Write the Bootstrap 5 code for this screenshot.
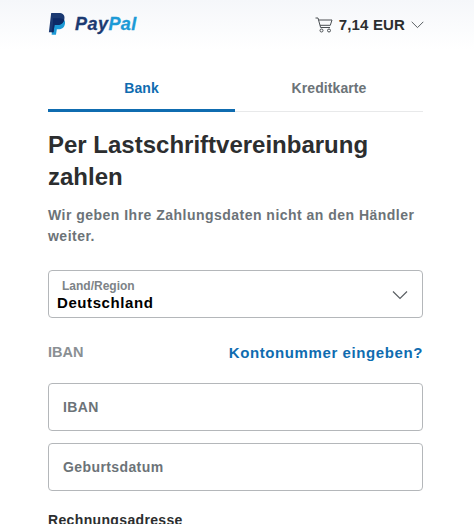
<!DOCTYPE html>
<html lang="de">
<head>
<meta charset="utf-8">
<title>PayPal</title>
<link href="https://cdn.jsdelivr.net/npm/bootstrap@5.3.0/dist/css/bootstrap.min.css" rel="stylesheet">
<style>
html,body{height:524px;overflow:hidden;background:#fff}
body{font-family:"Liberation Sans",Arial,sans-serif;color:#2c2e2f}
.pp-top{height:50px;padding:0 50px 0 48px;background:linear-gradient(180deg,#f5f7fa 0%,#fff 100%)}
.pp-logo{width:19px;height:23px;margin-top:-2px}
.pp-brand{font-size:18px;font-weight:700;font-style:italic;letter-spacing:.45px;margin-left:8px;line-height:24px;margin-top:-2px;-webkit-text-stroke:.3px currentColor}
.pp-b1{color:#1b3a72}.pp-b2{color:#1c9ad6}
.pp-amt{font-size:15px;font-weight:700;letter-spacing:.15px;color:#2c2e2f;margin:0 6px 0 6px;line-height:18px}
.pp-main{padding:0 51px 0 48px}
.pp-tabs{height:62px;border-bottom:1px solid #e8e9ea}
.pp-tab{flex:1 1 50%;font-size:14px;font-weight:700;text-align:center;padding-top:28px;color:#6c7378;letter-spacing:.1px;margin-bottom:-1px}
.pp-on{color:#0f6cb0;border-bottom:3px solid #0f6cb0;flex-basis:187px;flex-grow:0}
.pp-h{font-size:24px;line-height:32px;font-weight:700;letter-spacing:0;margin:17px 0 0;color:#2c2e2f}
.pp-sub{font-size:14px;line-height:21px;font-weight:700;letter-spacing:.48px;color:#6c7378;margin:12px 0 0}
.pp-field{border:1px solid #b4b7ba;border-radius:4px;height:48px;background:#fff}
.pp-sel{margin-top:23px;position:relative;padding:8px 0 0 8px}
.pp-lab{font-size:12px;line-height:14px;font-weight:700;color:#7d8387;padding-left:5px;letter-spacing:0}
.pp-val{font-size:15px;line-height:18px;font-weight:700;color:#000;letter-spacing:.58px;padding-top:1px}
.pp-chev{position:absolute;right:14px;top:19px;width:16px;height:10px}
.pp-row{margin-top:26px;height:17px;line-height:17px;font-weight:700}
.pp-ib{font-size:14.5px;color:#8a8f93}
.pp-lnk{font-size:15px;color:#0f6cb0;letter-spacing:.6px;text-decoration:none}
.pp-inp{display:flex;align-items:center;padding:1px 0 0 14px;font-size:14px;font-weight:700;color:#6c7378;letter-spacing:.4px}
.pp-i1{margin-top:22px}.pp-i2{margin-top:12px}
.pp-addr{font-size:14px;font-weight:700;letter-spacing:.35px;margin-top:21px;line-height:17px;color:#2c2e2f}
</style>
</head>
<body>
<header class="pp-top d-flex align-items-center justify-content-between">
  <div class="d-flex align-items-center">
    <svg class="pp-logo" viewBox="0 0 18 24" aria-hidden="true">
      <path fill="#1c9ad6" d="M4 5.500h7.500c3.600 0 5.900 2 5.300 5.600-.6 3.800-3.300 5.900-6.800 5.900H8.300l-.9 5.800H2.900z"/>
      <path fill="#1b3a72" d="M2.400 0h7.900c4 0 6.600 2.100 5.900 6-.7 4.200-3.800 6.600-7.700 6.600H5.900l-1.100 7.400H0z"/>
      <path fill="#0d2a66" d="M4.300 5.500h6.900c2 .1 3.800.7 4.900 1.600-.8 3.600-3.700 5.500-7.600 5.500H5.900l-1.100 7.400H2.900l1.400-8.900z"/>
    </svg>
    <div class="pp-brand"><span class="pp-b1">Pay</span><span class="pp-b2">Pal</span></div>
  </div>
  <div class="d-flex align-items-center">
    <svg width="18" height="16" viewBox="0 0 18 16" fill="none" stroke="#4a4f53" stroke-width="1" aria-hidden="true">
      <path d="M0.500 1h2.500l2.600 9.500h9.400"/><path d="M3.600 3h13.400l-1.700 5.300H5"/>
      <circle cx="6.500" cy="13.500" r="1.500"/><circle cx="14" cy="13.500" r="1.500"/>
    </svg>
    <span class="pp-amt">7,14 EUR</span>
    <svg width="13" height="8" viewBox="0 0 13 8" fill="none" stroke="#5a5f63" stroke-width="1" aria-hidden="true"><path d="M.7.800l5.800 5.800L12.300.800"/></svg>
  </div>
</header>
<main class="pp-main">
  <div class="pp-tabs d-flex">
    <div class="pp-tab pp-on">Bank</div>
    <div class="pp-tab">Kreditkarte</div>
  </div>
  <h1 class="pp-h">Per Lastschriftvereinbarung zahlen</h1>
  <p class="pp-sub">Wir geben Ihre Zahlungsdaten nicht an den Händler weiter.</p>
  <div class="pp-field pp-sel">
    <div class="pp-lab">Land/Region</div>
    <div class="pp-val">Deutschland</div>
    <svg class="pp-chev" viewBox="0 0 16 10" fill="none" stroke="#5a5f63" stroke-width="1.200" aria-hidden="true"><path d="M1 1.500l7 7 7-7"/></svg>
  </div>
  <div class="pp-row d-flex justify-content-between">
    <span class="pp-ib">IBAN</span>
    <a class="pp-lnk" href="#">Kontonummer eingeben?</a>
  </div>
  <div class="pp-field pp-inp pp-i1">IBAN</div>
  <div class="pp-field pp-inp pp-i2">Geburtsdatum</div>
  <div class="pp-addr">Rechnungsadresse</div>
</main>
</body>
</html>
